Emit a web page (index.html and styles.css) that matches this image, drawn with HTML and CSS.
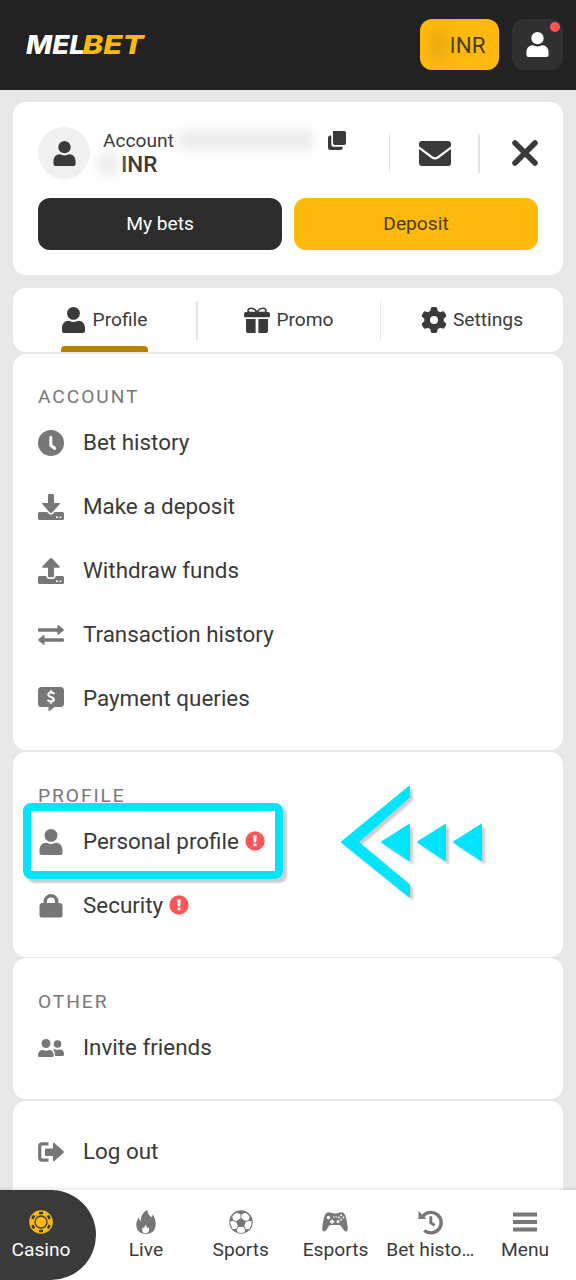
FILE: index.html
```html
<!DOCTYPE html>
<html lang="en">
<head>
<meta charset="utf-8">
<meta name="viewport" content="width=device-width, initial-scale=1">
<title>Melbet – Profile</title>
<link rel="stylesheet" href="styles.css">
</head>
<body>
<svg class="defs" aria-hidden="true">
  <symbol id="user" viewBox="0 0 23 26"><circle cx="11.5" cy="6.4" r="6.4"/><path d="M6.5 13.7C8.4 13.7 9 15 11.5 15S14.6 13.7 16.500 13.700C20.500 13.700 23 17 23 21v3q0 2-2 2H2q-2 0-2-2v-3C0 17 2.500 13.700 6.500 13.700Z"/></symbol>
  <symbol id="alert" viewBox="0 0 20 20"><circle cx="10" cy="10" r="9.700" fill="#ff5659"/><path fill="#fff" d="M8.300 4.500h3.400l-.5 6.700H8.800zM8.500 12.600h3v2.600h-3z"/></symbol>
</svg>
<header class="header">
  <svg class="logo" viewBox="0 0 120 24" role="img" aria-label="MELBET">
    <text class="logo-text" x="0" y="21" textLength="59" lengthAdjust="spacingAndGlyphs" fill="#fff">MEL</text>
    <text class="logo-text" x="56.500" y="21" textLength="61" lengthAdjust="spacingAndGlyphs" fill="#ffb80c">BET</text>
  </svg>
  <div class="header-actions">
    <button class="balance"><span class="smudge"></span>INR</button>
    <button class="user-btn"><svg class="i-user"><use href="#user"/></svg><span class="dot"></span></button>
  </div>
</header>

<main class="main">
  <section class="card account">
    <div class="account-top">
      <div class="avatar"><svg class="i-user"><use href="#user"/></svg></div>
      <div class="info">
        <div class="info-line">Account<span class="mask mask-id"></span>
          <svg class="i-copy" viewBox="0 0 18 19"><path d="M5 0h11q2 0 2 2v10q0 2-2 2H7q-2 0-2-2Z"/><path d="M3.300 4.500v9q0 2.300 2.300 2.300h9.100v1q0 2.200-2.200 2.200H2.500Q0 19 0 16.500V7q0-2.500 2.500-2.500Z"/></svg>
        </div>
        <div class="info-line currency"><span class="mask mask-sum"></span>INR</div>
      </div>
      <i class="rule"></i>
      <svg class="i-mail" viewBox="0 0 32 25"><path d="M3 0h26q3 0 3 3v2.200L18.500 15.300q-2.500 1.800-5 0L0 5.200V3q0-3 3-3Z"/><path d="M0 8 12.700 17.400q3.300 2.300 6.600 0L32 8V22q0 3-3 3H3q-3 0-3-3Z"/></svg>
      <i class="rule rule-wide"></i>
      <svg class="i-close" viewBox="0 0 26 26"><path d="M3 3l20 20M23 3 3 23"/></svg>
    </div>
    <div class="buttons">
      <button class="btn dark">My bets</button>
      <button class="btn gold">Deposit</button>
    </div>
  </section>

  <nav class="card tabs">
    <a class="tab active"><svg class="i-tab-user"><use href="#user"/></svg>Profile</a>
    <i class="rule rule-wide"></i>
    <a class="tab promo"><svg class="i-gift" viewBox="0 0 26 26"><path d="M2 5h22q2 0 2 2v2q0 1.300-1.300 1.300H1.300Q0 10.300 0 9V7q0-2 2-2ZM2 12h9.600v14H4q-2 0-2-2ZM14.400 12H24v12q0 2-2 2h-7.600Z"/><path class="bow" d="M13 5.500C10 5.500 4 6.500 4 3.700 4 .500 10-.300 13 5.500 16-.300 22 .500 22 3.700 22 6.500 16 5.500 13 5.500Z"/></svg>Promo</a>
    <i class="rule"></i>
    <a class="tab"><svg class="i-gear" viewBox="0 0 512 512"><path d="M495.900 166.600c3.200 8.700.5 18.400-6.400 24.600l-43.300 39.400c1.100 8.300 1.700 16.800 1.700 25.400s-.6 17.100-1.700 25.400l43.300 39.400c6.900 6.200 9.600 15.900 6.400 24.600-4.400 11.900-9.700 23.300-15.800 34.300l-4.700 8.100c-6.600 11-14 21.400-22.100 31.200-5.900 7.200-15.700 9.600-24.500 6.800l-55.700-17.700c-13.400 10.300-28.200 18.900-44 25.400l-12.500 57.100c-2 9.100-9 16.300-18.200 17.800-13.800 2.300-28 3.500-42.500 3.500s-28.700-1.200-42.500-3.500c-9.200-1.500-16.200-8.700-18.200-17.800l-12.500-57.100c-15.800-6.500-30.600-15.100-44-25.400l-55.600 17.800c-8.800 2.800-18.600.3-24.500-6.800-8.100-9.800-15.500-20.200-22.100-31.200l-4.700-8.100c-6.100-11-11.400-22.400-15.800-34.300-3.200-8.700-.5-18.400 6.400-24.600l43.300-39.400C64.600 273.100 64 264.600 64 256s.6-17.100 1.700-25.400l-43.300-39.400c-6.900-6.200-9.600-15.900-6.400-24.600 4.400-11.900 9.700-23.300 15.800-34.300l4.700-8.100c6.600-11 14-21.400 22.100-31.200 5.900-7.200 15.700-9.600 24.500-6.800l55.700 17.700c13.400-10.300 28.200-18.900 44-25.400l12.500-57.100c2-9.100 9-16.300 18.200-17.800C227.300 1.200 241.500 0 256 0s28.700 1.200 42.500 3.500c9.200 1.500 16.200 8.700 18.200 17.800l12.500 57.100c15.800 6.500 30.600 15.100 44 25.400l55.700-17.700c8.800-2.800 18.600-.3 24.500 6.800 8.100 9.800 15.500 20.200 22.100 31.200l4.700 8.100c6.100 11 11.400 22.400 15.700 34.400ZM256 336a80 80 0 1 0 0-160 80 80 0 1 0 0 160Z"/></svg>Settings</a>
  </nav>

  <section class="card group">
    <h2>ACCOUNT</h2>
    <a class="row"><svg class="icon" viewBox="0 0 26 26"><circle cx="13" cy="13" r="13"/><path class="hand" d="M12.800 7.300v8l3.800 3"/></svg>Bet history</a>
    <a class="row"><svg class="icon" viewBox="0 0 26 26"><path d="M11 0h4q1 0 1 1v8h5.500q1 0 .3 1l-7.600 8.500q-1.200 1.300-2.400 0L4.200 10q-.7-1 .3-1H10V1q0-1 1-1Z"/><path fill-rule="evenodd" d="M1.500 18h7.700l1.600 1.800q2.200 2 4.400 0l1.600-1.800h7.700q1.500 0 1.500 1.500v5q0 1.500-1.500 1.500h-23Q0 26 0 24.500v-5Q0 18 1.500 18ZM18 22.500h2v1.500h-2ZM21.500 22.500h2v1.500h-2Z"/></svg>Make a deposit</a>
    <a class="row"><svg class="icon" viewBox="0 0 26 26"><path d="M11.800.600q1.200-1.100 2.400 0l7.400 8q.8 1.100-.3 1.100H16v8q0 1.500-1.500 1.500h-3Q10 19.200 10 17.700v-8H4.700q-1.100 0-.3-1.100Z"/><path fill-rule="evenodd" d="M1.500 18h6.800q.3 3 3 3h3.400q2.700 0 3-3h6.800q1.500 0 1.500 1.500v5q0 1.500-1.500 1.500h-23Q0 26 0 24.500v-5Q0 18 1.500 18ZM18 22.500h2v1.500h-2ZM21.500 22.500h2v1.500h-2Z"/></svg>Withdraw funds</a>
    <a class="row"><svg class="icon" viewBox="0 0 26 26"><path d="M1 6.300h18.500V4q0-1.600 1.200-.700l4.800 4q.8.700 0 1.400l-4.800 3.900q-1.200.8-1.200-.6V9.700H1q-1 0-1-1V7.300q0-1 1-1ZM25 16.300H6.500V14q0-1.600-1.200-.700l-4.800 4q-.8.700 0 1.400l4.800 3.900q1.200.8 1.200-.6v-2.300H25q1 0 1-1v-1.400q0-1-1-1Z"/></svg>Transaction history</a>
    <a class="row"><svg class="icon" viewBox="0 0 26 26"><path d="M3.500 1h19Q26 1 26 4.500v13q0 3.500-3.500 3.500H16.500l-5 4q-1 .5-1-.600V21h-7Q0 21 0 17.500v-13Q0 1 3.500 1Z"/><path class="sign" d="M16.200 8Q15.500 6.500 13 6.500t-2.700 2Q10.500 10.300 13 10.900t2.900 2.400Q15.700 15.400 13 15.400T9.800 13.700M13 4.200v2.300M13 15.400v2.400"/></svg>Payment queries</a>
  </section>

  <section class="card group profile">
    <h2>PROFILE</h2>
    <a class="row"><svg class="icon"><use href="#user"/></svg>Personal profile<svg class="alert"><use href="#alert"/></svg></a>
    <a class="row"><svg class="icon" viewBox="0 0 26 26"><path fill-rule="evenodd" d="M5.500 10V8.500a7.500 7.500 0 0 1 15 0V10h1q3 0 3 3v9.500q0 2-2 2h-19q-2 0-2-2V13q0-3 3-3ZM9 10h8V8.500a4 4 0 0 0-8 0Z"/></svg>Security<svg class="alert"><use href="#alert"/></svg></a>
    <div class="highlight"></div>
    <svg class="pointer" viewBox="0 0 150 118"><path d="M69 2v10L17.500 57 69 100v11L2 57Z"/><path d="M69 40v35L42 57ZM105 40v35L78 57ZM141 40v35L114 57Z"/></svg>
  </section>

  <section class="card group other">
    <h2>OTHER</h2>
    <a class="row"><svg class="icon" viewBox="0 0 26 26"><circle cx="8" cy="8.500" r="4.500"/><circle cx="19.500" cy="9" r="3.800"/><path d="M4.300 15c1.600 0 2 .8 3.700.8s2.100-.8 3.700-.8q4 .5 4 5.500 0 1.500-1.500 1.500H1.500Q0 22 0 20.500q0-5 4.300-5.500ZM15 14.600q1.200-.500 2.300 0 2.200.9 4.400 0Q26 14.300 26 19.500 26 21 24.500 21h-7.300q.2-4-2.200-6.400Z"/></svg>Invite friends</a>
  </section>

  <section class="card group logout">
    <a class="row"><svg class="icon" viewBox="0 0 26 26"><path d="M8 9.500h7V4.700q0-1.700 1.300-.6l9.100 8q.8.900 0 1.800l-9.100 8q-1.300 1.100-1.300-.600v-4.300H8q-1 0-1-1v-5.500q0-1 1-1Z"/><path class="bracket" d="M10.500 4.900H4.300q-2.600 0-2.600 2.600v11q0 2.600 2.600 2.600h6.200"/></svg>Log out</a>
  </section>
</main>

<nav class="bottom">
  <a class="item casino"><svg class="nav-icon" viewBox="0 0 24 24"><circle cx="12" cy="12" r="11.800"/><circle class="line" cx="12" cy="12" r="6"/><path class="slot" d="M10 3h4M10 21h4M3.200 8.900l2-3.400M18.800 18.500l2-3.400M3.200 15.100l2 3.400M18.800 5.500l2 3.400"/></svg>Casino</a>
  <a class="item"><svg class="nav-icon" viewBox="0 0 24 24"><path d="M13.300 0c.4 4 2 5 3.900 7.300 1.300-.7 1.600-2 1.500-3.200 1.800 2.800 3 6.400 3 10 0 6-3.200 9.900-9.700 9.900S2.300 20 2.300 14.500c0-3.300 1.500-5.300 2.500-7.300.5 2.200 1 3.300 2.200 3.900C6.300 6 9.500 2 13.300 0Z"/><path class="flame" d="M12 14.700c.3 2 .8 2.600 1.800 3.500.6-.3.800-.8.900-1.500 1.200 3.500.2 6.500-2.900 6.500s-3.800-2-3.400-4.500l.8-1.800c.3 1 .5 1.200 1 1.400.1-1.500.8-2.800 1.800-3.600Z"/></svg>Live</a>
  <a class="item"><svg class="nav-icon ball" viewBox="0 0 26 26"><circle cx="13" cy="13" r="12.700"/><g class="white"><path d="M8.500 2.900 12.500 5v4L8.200 12 4.700 10.700 3.500 7.200Q5.300 4.200 8.500 2.900ZM17.500 2.900 13.500 5v4l4.300 3 3.500-1.300 1.200-3.500q-1.800-3-5-4.300ZM1.300 12.500l2.800-.8 3.800 1.300 1.700 4.700-2.200 2.900-3.500-.1Q1.400 17 1.300 12.500ZM24.700 12.500l-2.800-.8-3.800 1.300-1.700 4.700 2.200 2.900 3.500-.1q2.500-3.500 2.600-8ZM10.400 18.300h5.200l2.100 2.900-1 3q-3.700 1.200-7.400 0l-1-3Z"/></g></svg>Sports</a>
  <a class="item"><svg class="nav-icon pad" viewBox="0 0 26 20"><path d="M5.500.500q2.500-.8 4 .6 3.500.6 7 0 1.500-1.400 4-.6 3 .8 4.200 8.500Q27 19 24.200 19.600q-2 .3-4.700-5.100-1-1.500-2.500-1.500H9q-1.500 0-2.500 1.500Q3.800 19.900 1.800 19.600-1 19 1.300 9 2.500 1.300 5.500.500Z"/><g class="white"><circle cx="6.500" cy="5.500" r="1.700"/><circle cx="16.800" cy="5.500" r="1"/><circle cx="21.500" cy="5.500" r="1"/><circle cx="19.200" cy="3.300" r="1"/><circle cx="19.200" cy="7.700" r="1"/><circle cx="11.800" cy="5" r=".8"/><circle cx="14.200" cy="5" r=".8"/><circle cx="16" cy="9.500" r="1.500"/><path d="M9.300 7.400h1.600v1.400h1.400v1.600h-1.400v1.400H9.300v-1.400H7.900V8.800h1.400Z"/></g></svg>Esports</a>
  <a class="item"><svg class="nav-icon history" viewBox="0 0 25 25"><path class="arc" d="M4.500 6.500A10.700 10.700 0 1 1 6 21.300"/><path d="M0 1v8.500h8.300Z"/><path class="tick" d="M12.800 6.500v6.800l4 2.700"/></svg>Bet histo…</a>
  <a class="item"><svg class="nav-icon" viewBox="0 0 24 24"><path d="M0 2.500h24v4H0ZM0 10h24v4H0ZM0 17.500h24v4H0Z"/></svg>Menu</a>
</nav>
</body>
</html>
```

FILE: styles.css
```css
* { box-sizing: border-box; }
body {
  margin: 0; height: 1280px; overflow: hidden;
  display: flex; flex-direction: column;
  background: #e8e8e8; color: #3a3a3a;
  font-family: Roboto, "Liberation Sans", sans-serif;
  font-size: 19.2px;
}
svg { display: block; flex: none; fill: currentColor; overflow: visible; }
button { border: 0; padding: 0; margin: 0; font: inherit; color: inherit; }
.defs { position: absolute; width: 0; height: 0; }

.header {
  flex: none; height: 90px; padding: 0 13px 1px 26px; background: #222;
  display: flex; align-items: center; justify-content: space-between;
}
.logo { width: 120px; height: 24px; }
.logo-text { font: italic 800 26px Inter, sans-serif; }
.header-actions { display: flex; gap: 13px; }
.balance {
  width: 79px; height: 51px; border-radius: 12px; background: #ffb80c; color: #4a3c17;
  font-size: 22.4px; display: flex; align-items: center; justify-content: center;
}
.smudge { width: 18px; height: 28px; margin-right: 3px; margin-left: -5px; background: #edac12; filter: blur(5px); }
.user-btn {
  position: relative; width: 51px; height: 51px; border-radius: 12px;
  background: #303030; color: #fff; display: flex; align-items: center; justify-content: center;
}
.dot { position: absolute; top: 3px; right: 3px; width: 10px; height: 10px; border-radius: 50%; background: #ff5659; }
.i-user { width: 23px; height: 25px; }

.main { flex: 1; min-height: 0; overflow: hidden; padding: 12px 13px 0; }
.card { background: #fff; border-radius: 13px; }
.account { height: 173px; padding: 25px; margin-bottom: 13px; }
.account-top { display: flex; align-items: center; height: 52px; }
.avatar {
  width: 52px; height: 52px; border-radius: 50%; background: #f0f0f0;
  display: flex; align-items: center; justify-content: center;
}
.info { width: 299px; padding: 0 0 2px 13px; }
.info-line { display: flex; align-items: center; height: 24px; }
.i-copy { width: 18px; height: 19px; margin-left: 15px; }
.mask { background: #ebebeb; filter: blur(6px); }
.mask-id { width: 134px; height: 20px; margin-left: 5px; }
.currency { font-size: 22.4px; font-weight: 500; }
.mask-sum { width: 20px; height: 22px; margin: 0 2px 0 -4px; }
.rule { width: 1px; height: 39px; background: #e4e4e4; }
.rule-wide { width: 2px; }
.i-mail { width: 32px; height: 25px; margin: 0 27px 0 29px; }
.i-close { width: 26px; height: 26px; margin-left: 32px; }
.i-close path { stroke: currentColor; stroke-width: 5.500px; stroke-linecap: round; }
.buttons { display: grid; grid-template-columns: 1fr 1fr; gap: 12px; margin-top: 19px; }
.btn { height: 52px; padding-bottom: 2px; border-radius: 12px; }
.dark { background: #2d2d2d; color: #fff; }
.gold { background: #ffb80c; color: #4a3c17; }

.tabs { height: 64px; margin-bottom: 2px; display: flex; align-items: center; }
.tab { position: relative; flex: 1; height: 64px; padding-bottom: 1px; display: flex; align-items: center; justify-content: center; }
.active { flex: 0 0 183px; }
.active::after {
  content: ""; position: absolute; left: 48px; bottom: 0; width: 87px; height: 6px;
  border-radius: 4px 4px 0 0; background: #b38300;
}
.i-tab-user { width: 23px; height: 26px; margin-right: 8px; }
.i-gift { width: 26px; height: 26px; margin-right: 6px; }
.bow { fill: none; stroke: currentColor; stroke-width: 1.600px; }
.i-gear { width: 26px; height: 26px; margin-right: 6px; }

.group { position: relative; padding: 33px 25px 20px; margin-bottom: 2px; }
.group h2 {
  margin: 0 0 3px; height: 20px; line-height: 20px;
  font-size: 19.2px; font-weight: 400; letter-spacing: 1.920px; color: #777;
}
.row { display: flex; align-items: center; height: 64px; font-size: 22.4px; }
.icon { width: 26px; height: 26px; margin: 1px 19px 0 0; color: #777; }
.hand { fill: none; stroke: #fff; stroke-width: 3px; stroke-linecap: round; stroke-linejoin: round; }
.sign { fill: none; stroke: #fff; stroke-width: 2.100px; }
.bracket { fill: none; stroke: currentColor; stroke-width: 3.200px; }
.profile { padding-top: 34px; margin-bottom: 1px; }
.alert { width: 20px; height: 20px; margin-left: 6px; }
.highlight {
  position: absolute; left: 10px; top: 51px; width: 260px; height: 76px;
  border: 8px solid #00e5ff; border-radius: 8px; box-shadow: 4px 4px 2px #0003;
}
.pointer {
  position: absolute; left: 327px; top: 33px; width: 150px; height: 118px;
  color: #00e5ff; filter: drop-shadow(3px 3px 1px #0003);
}
.pointer path { stroke: currentColor; stroke-width: 2px; stroke-linejoin: round; }
.other { padding-top: 34px; }
.logout { padding: 18px 25px 20px; }

.bottom {
  position: relative; flex: none; height: 90px; padding-right: 3.500px; background: #fff;
  display: flex; box-shadow: 0 -1px 4px #0002;
}
.item { flex: 1; display: flex; flex-direction: column; align-items: center; padding-top: 20px; line-height: 29px; }
.casino {
  flex: none; width: 96px; margin-right: 2.500px; padding-right: 14px;
  border-radius: 0 45px 45px 0; background: #3a3a3a; color: #fff;
}
.nav-icon { width: 24px; height: 24px; margin-bottom: 1px; color: #777; }
.casino .nav-icon { color: #ffb80c; }
.line { fill: none; stroke: #3a3a3a; stroke-width: 1.300px; }
.slot { fill: none; stroke: #3a3a3a; stroke-width: 2.500px; }
.flame, .white { fill: #fff; }
.ball, .pad { width: 26px; }
.history { width: 25px; }
.arc, .tick { fill: none; stroke: currentColor; stroke-width: 3.500px; }
.tick { stroke-width: 3px; }
```
